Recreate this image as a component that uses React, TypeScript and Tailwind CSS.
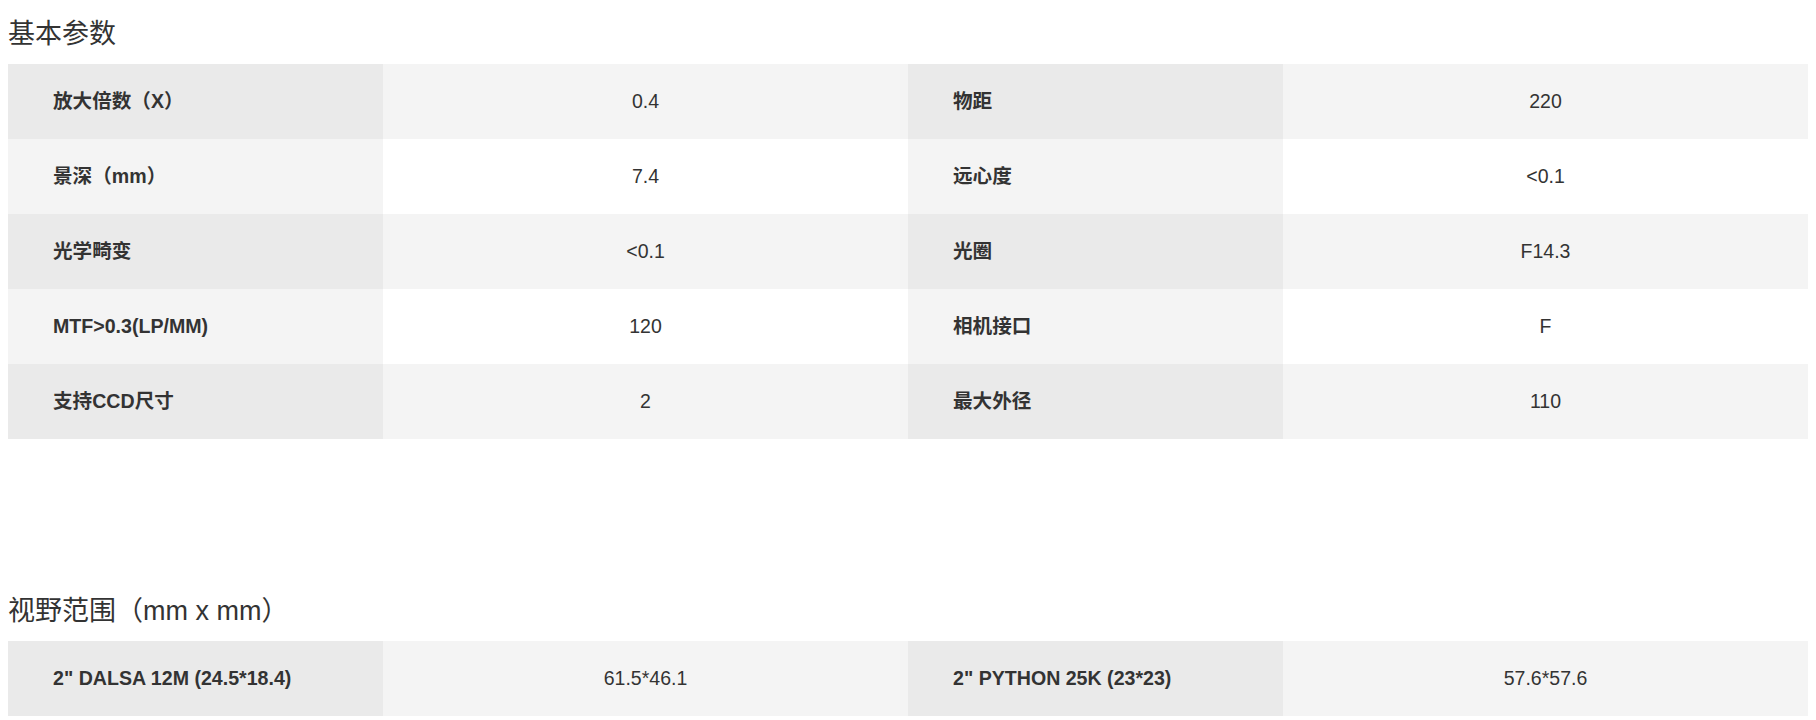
const font = "font-['Liberation_Sans','Noto_Sans_CJK_SC',sans-serif]"

type Row = [string, string, string, string]

const basic: Row[] = [
  ['放大倍数（X）', '0.4', '物距', '220'],
  ['景深（mm）', '7.4', '远心度', '<0.1'],
  ['光学畸变', '<0.1', '光圈', 'F14.3'],
  ['MTF>0.3(LP/MM)', '120', '相机接口', 'F'],
  ['支持CCD尺寸', '2', '最大外径', '110'],
]

const fov: Row[] = [['2" DALSA 12M (24.5*18.4)', '61.5*46.1', '2" PYTHON 25K (23*23)', '57.6*57.6']]

function SpecTable({ rows }: { rows: Row[] }) {
  return (
    <div className="w-[1800px]">
      {rows.map((r, i) => {
        const odd = i % 2 === 0
        const labelBg = odd ? 'bg-[#eaeaea]' : 'bg-[#f4f4f4]'
        const valueBg = odd ? 'bg-[#f4f4f4]' : 'bg-white'
        return (
          <div key={i} className="flex h-[75px] text-[#333]">
            <div className={`w-[375px] flex items-center pl-[45px] text-[19.6px] font-bold ${labelBg}`}>{r[0]}</div>
            <div className={`w-[525px] flex items-center justify-center text-[19.5px] ${valueBg}`}>{r[1]}</div>
            <div className={`w-[375px] flex items-center pl-[45px] text-[19.6px] font-bold ${labelBg}`}>{r[2]}</div>
            <div className={`w-[525px] flex items-center justify-center text-[19.5px] ${valueBg}`}>{r[3]}</div>
          </div>
        )
      })}
    </div>
  )
}

function Section({ title, rows, className = '' }: { title: string; rows: Row[]; className?: string }) {
  return (
    <section className={className}>
      <h2 className="pt-[14px] pb-[10px] text-[27px] leading-[40px] text-[#333] font-normal">{title}</h2>
      <SpecTable rows={rows} />
    </section>
  )
}

export default function App() {
  return (
    <div className={`min-h-[720px] bg-white px-[8px] ${font}`}>
      <Section title="基本参数" rows={basic} />
      <Section title="视野范围（mm x mm）" rows={fov} className="mt-[138px]" />
    </div>
  )
}
